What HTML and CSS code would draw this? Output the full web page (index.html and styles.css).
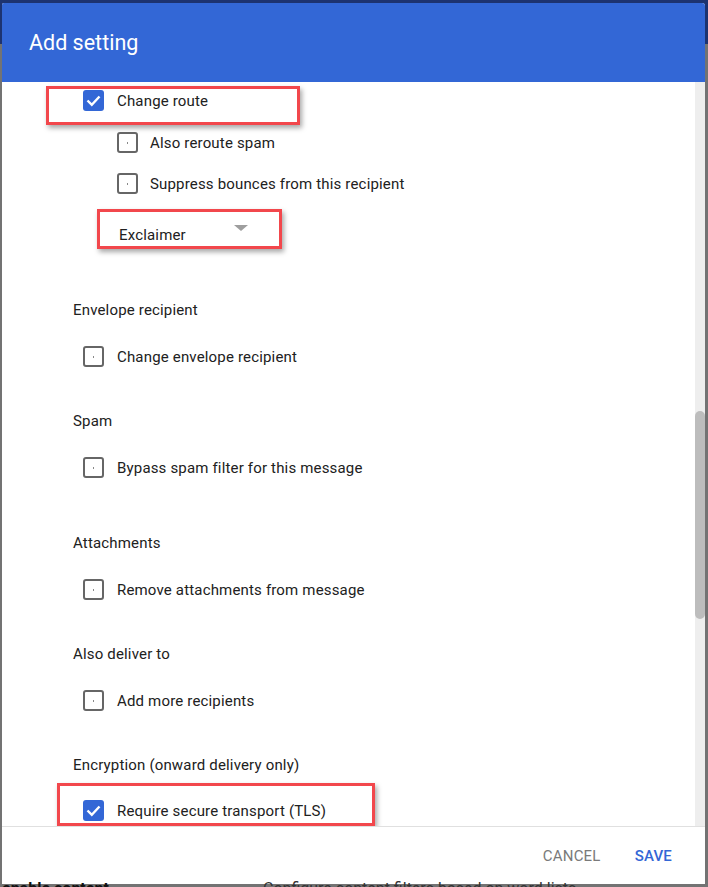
FILE: index.html
```html
<!DOCTYPE html>
<html>
<head>
<meta charset="utf-8">
<link rel="stylesheet" href="styles.css">
</head>
<body>
<div class="page">
  <div class="dialog">
    <header class="dialog-header"><h1 class="dialog-title">Add setting</h1></header>
    <div class="dialog-body">
      <div class="content">
        <div class="mark mark-route">
          <label class="option"><span class="cb cb-on"><svg viewBox="0 0 21 21" width="21" height="21"><polyline points="4.5,10.5 8.8,14.8 16.5,6.5" fill="none" stroke="#fff" stroke-width="2.4"/></svg></span><span>Change route</span></label>
        </div>
        <div class="suboptions">
          <label class="option"><span class="cb"></span><span>Also reroute spam</span></label>
          <label class="option"><span class="cb"></span><span>Suppress bounces from this recipient</span></label>
        </div>
        <div class="mark mark-select">
          <div class="select"><span class="select-value">Exclaimer</span><span class="caret"></span></div>
        </div>
        <section class="group group-first">
          <div class="group-label">Envelope recipient</div>
          <label class="option"><span class="cb"></span><span>Change envelope recipient</span></label>
        </section>
        <section class="group">
          <div class="group-label">Spam</div>
          <label class="option"><span class="cb"></span><span>Bypass spam filter for this message</span></label>
        </section>
        <section class="group group-wide">
          <div class="group-label">Attachments</div>
          <label class="option"><span class="cb"></span><span>Remove attachments from message</span></label>
        </section>
        <section class="group">
          <div class="group-label">Also deliver to</div>
          <label class="option"><span class="cb"></span><span>Add more recipients</span></label>
        </section>
        <section class="group">
          <div class="group-label">Encryption (onward delivery only)</div>
          <div class="mark mark-tls">
            <label class="option"><span class="cb cb-on"><svg viewBox="0 0 21 21" width="21" height="21"><polyline points="4.5,10.5 8.8,14.8 16.5,6.5" fill="none" stroke="#fff" stroke-width="2.4"/></svg></span><span>Require secure transport (TLS)</span></label>
          </div>
        </section>
      </div>
      <div class="scrollbar"><div class="thumb"></div></div>
    </div>
    <footer class="dialog-footer">
      <button class="btn btn-cancel">Cancel</button>
      <button class="btn btn-save">Save</button>
    </footer>
  </div>
  <div class="under">
    <span class="under-title">enable content</span>
    <span class="under-desc">Configure content filters based on word lists</span>
  </div>
</div>
</body>
</html>
```
FILE: styles.css
```css
* { box-sizing: border-box; }
html, body { margin: 0; padding: 0; }
body {
  width: 708px;
  height: 887px;
  overflow: hidden;
  font-family: Roboto, "Noto Sans", "Liberation Sans", sans-serif;
  background: linear-gradient(#1d3370 0, #1d3370 44px, #737373 44px);
}
.page {
  padding: 3px 3px 0 2px;
  height: 887px;
  overflow: hidden;
}
.dialog {
  width: 703px;
  height: 881px;
  background: #fff;
  border-radius: 2px 3px 0 0;
  display: flex;
  flex-direction: column;
  overflow: hidden;
}
.dialog-header {
  height: 79px;
  flex: none;
  background: #3367d6;
  display: flex;
  align-items: center;
  padding-left: 27px;
  padding-bottom: 1px;
}
.dialog-title {
  margin: 0;
  color: #fff;
  font-size: 21.5px;
  font-weight: 400;
}
.dialog-body {
  height: 744px;
  flex: none;
  display: flex;
}
.content {
  flex: 1;
  overflow: hidden;
  padding-left: 71px;
  padding-top: 4px;
  color: #212121;
  font-size: 15px;
  line-height: 20px;
  letter-spacing: 0.17px;
}
.scrollbar {
  width: 10px;
  flex: none;
  background: #eeeeee;
  padding-top: 329px;
}
.thumb {
  height: 208px;
  background: #bdbdbd;
  border-radius: 5px;
}
.option {
  display: flex;
  align-items: center;
  height: 21px;
  gap: 13px;
  margin-left: 10px;
  white-space: nowrap;
}
.cb {
  width: 21px;
  height: 21px;
  flex: none;
  border: 2px solid #666;
  border-radius: 3px;
  display: flex;
  align-items: center;
  justify-content: center;
}
.cb::after {
  content: "";
  width: 1px;
  height: 2px;
  background: #888;
}
.cb-on {
  border: none;
  background: #3367d6;
}
.cb-on::after { display: none; }
.cb-on svg { display: block; }

.mark {
  border: 3px solid #f2474c;
  box-shadow: 2px 3px 5px rgba(0,0,0,0.35);
}
.mark-route {
  width: 254px;
  margin-left: -27px;
  padding: 1px 0 11px 24px;
}
.suboptions {
  margin-left: 34px;
  padding-top: 7px;
  display: flex;
  flex-direction: column;
  gap: 20px;
}
.suboptions .option { gap: 12px; }
.mark-select {
  width: 185px;
  margin-left: 24px;
  margin-top: 15px;
  padding: 13px 0 1px 19px;
}
.select {
  display: flex;
  align-items: center;
  height: 20px;
}
.select-value {
  width: 114px;
  flex: none;
}
.caret {
  width: 0;
  height: 0;
  border-left: 7px solid transparent;
  border-right: 7px solid transparent;
  border-top: 6px solid #9e9e9e;
  margin-top: -14px;
  margin-left: 1px;
}
.group { margin-top: 44px; }
.group-first { margin-top: 51px; }
.group-wide { margin-top: 55px; }
.group-label { height: 20px; }
.group .option { margin-top: 26px; }
.mark-tls {
  width: 318px;
  margin-left: -16px;
  margin-top: 8px;
  padding: 14px 0 2px 13px;
}
.mark-tls .option { margin-top: 0; }

.dialog-footer {
  height: 58px;
  flex: none;
  border-top: 1px solid #e0e0e0;
  display: flex;
  justify-content: flex-end;
  align-items: center;
  gap: 34px;
  padding-right: 33px;
}
.btn {
  border: none;
  background: none;
  padding: 0;
  font-family: Roboto, "Noto Sans", sans-serif;
  font-size: 15px;
  font-weight: 500;
  text-transform: uppercase;
  letter-spacing: 0.2px;
}
.btn-cancel { color: #7a7a7a; font-weight: 400; }
.btn-save { color: #3367d6; }

.under {
  display: flex;
  height: 3px;
  overflow: visible;
  font-size: 16px;
  line-height: 16px;
  margin-top: -3px;
}
.under-title {
  font-weight: 700;
  color: #111;
  width: 261px;
}
.under-desc { color: #333; }
```
